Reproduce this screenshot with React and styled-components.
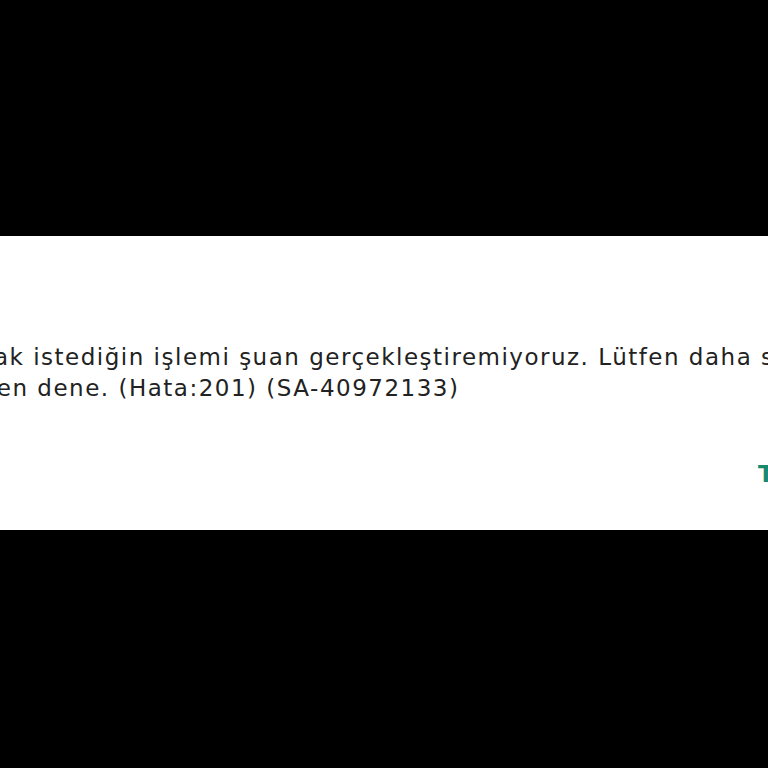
import React from 'react';
import styled, { createGlobalStyle } from 'styled-components';

const GlobalStyle = createGlobalStyle`
  html, body {
    margin: 0;
    padding: 0;
    background: #000;
    overflow: hidden;
  }
`;

const Screen = styled.div`
  width: 768px;
  height: 768px;
  display: flex;
  flex-direction: column;
  background: #000;
  overflow: hidden;
`;

const Dialog = styled.div`
  margin-top: 236px;
  margin-left: -74px;
  width: 1100px;
  height: 294px;
  flex-shrink: 0;
  background: #fff;
  display: flex;
  flex-direction: column;
  font-family: "DejaVu Sans", "Open Sans", sans-serif;
`;

const Message = styled.p`
  margin: 0;
  padding-top: 106px;
  width: 960px;
  font-size: 23px;
  line-height: 30.5px;
  color: #222;
  letter-spacing: 1.5px;
`;

const Actions = styled.div`
  display: flex;
  justify-content: flex-start;
  padding-left: 832px;
  margin-top: 58px;
`;

const TextButton = styled.button`
  border: 0;
  background: none;
  padding: 0;
  font-family: inherit;
  font-size: 23px;
  font-weight: 600;
  letter-spacing: 1px;
  color: #17896f;
  cursor: pointer;
`;

export default function App() {
  return (
    <>
      <GlobalStyle />
      <Screen>
        <Dialog>
          <Message>
            Yapmak istediğin işlemi şuan gerçekleştiremiyoruz. Lütfen daha sonra yeniden dene. (Hata:201) (SA-40972133)
          </Message>
          <Actions>
            <TextButton>TAMAM</TextButton>
          </Actions>
        </Dialog>
      </Screen>
    </>
  );
}
